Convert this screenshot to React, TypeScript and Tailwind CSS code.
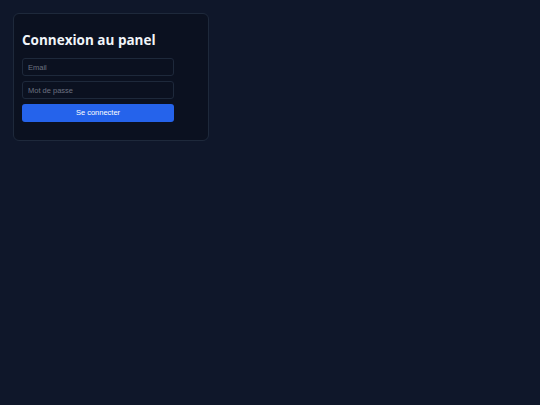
export default function App() {
  return (
    <div className="min-h-screen w-full bg-[#0f172a] pt-[13px] pl-[13px]">
      <div className="w-[196px] rounded-md border border-[#1e293b] bg-[#0b1120] px-2 pt-[16px] pb-[18px]">
        <h1 className="mb-[8px] font-['Open_Sans',sans-serif] text-[13.5px] font-bold leading-[20px] text-[#f1f5f9]">
          Connexion au panel
        </h1>
        <form className="flex w-[152px] flex-col gap-[5px] font-['Liberation_Sans',Arial,sans-serif]">
          <input
            type="email"
            placeholder="Email"
            className="h-[18px] w-full rounded-[3px] border border-[#1e293b] bg-[#0b1120] px-[5px] text-[7.5px] text-white outline-none placeholder:text-[#6b7280]"
          />
          <input
            type="password"
            placeholder="Mot de passe"
            className="h-[18px] w-full rounded-[3px] border border-[#1e293b] bg-[#0b1120] px-[5px] text-[7.5px] text-white outline-none placeholder:text-[#6b7280]"
          />
          <button
            type="button"
            className="h-[18px] w-full rounded-[3px] bg-[#2563eb] text-[7.5px] text-white"
          >
            Se connecter
          </button>
        </form>
      </div>
    </div>
  );
}
